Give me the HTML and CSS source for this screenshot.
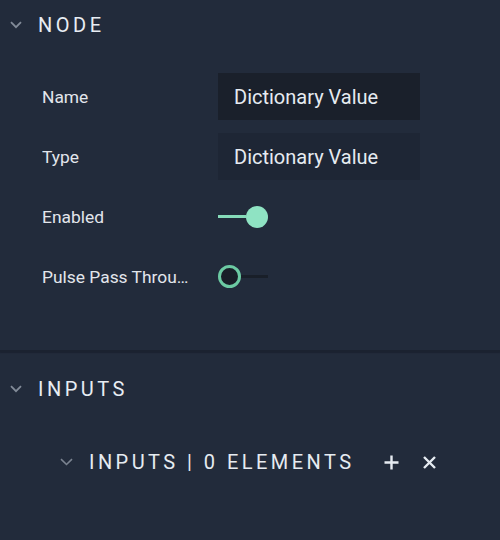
FILE: index.html
```html
<!DOCTYPE html>
<html>
<head>
<meta charset="utf-8">
<link rel="stylesheet" href="styles.css">
</head>
<body>
<div class="panel">
  <section class="section node">
    <div class="sec-head">
      <svg class="chev" width="12" height="8" viewBox="0 0 12 8"><path d="M1 1.2 L6 6.2 L11 1.2" fill="none" stroke="currentColor" stroke-width="1.8"/></svg>
      <span class="sec-title">NODE</span>
    </div>
    <div class="props">
      <div class="label">Name</div>
      <div class="field focused">Dictionary Value</div>
      <div class="label">Type</div>
      <div class="field">Dictionary Value</div>
      <div class="label">Enabled</div>
      <div class="ctl"><div class="toggle on"><span class="track"></span><span class="knob"></span></div></div>
      <div class="label">Pulse Pass Through</div>
      <div class="ctl"><div class="toggle off"><span class="knob"></span><span class="track"></span></div></div>
    </div>
  </section>
  <div class="divider"></div>
  <section class="section inputs">
    <div class="sec-head">
      <svg class="chev" width="12" height="8" viewBox="0 0 12 8"><path d="M1 1.2 L6 6.2 L11 1.2" fill="none" stroke="currentColor" stroke-width="1.8"/></svg>
      <span class="sec-title">INPUTS</span>
    </div>
    <div class="sub-head">
      <svg class="chev sub" width="13" height="8" viewBox="0 0 13 8"><path d="M1 1.2 L6.5 6.5 L12 1.2" fill="none" stroke="currentColor" stroke-width="1.6"/></svg>
      <span class="sub-title">INPUTS | 0 ELEMENTS</span>
      <svg class="act plus" width="15" height="15" viewBox="0 0 15 15"><path d="M7.5 0.5 V14.5 M0.5 7.5 H14.5" stroke="currentColor" stroke-width="2.4"/></svg>
      <svg class="act close" width="13" height="13" viewBox="0 0 13 13"><path d="M1 1 L12 12 M12 1 L1 12" stroke="currentColor" stroke-width="2.4"/></svg>
    </div>
  </section>
</div>
</body>
</html>
```
FILE: styles.css
```css
html, body {
  margin: 0;
  padding: 0;
  background: #222b3b;
}
body {
  width: 500px;
  height: 540px;
  overflow: hidden;
  font-family: Roboto, "Liberation Sans", sans-serif;
  color: #e4e9ef;
}
.panel {
  display: flex;
  flex-direction: column;
}
.sec-head {
  height: 48px;
  display: flex;
  align-items: center;
  padding-left: 10px;
  gap: 16px;
}
.chev {
  color: #828b98;
  flex: none;
}
.sec-title {
  font-size: 20px;
  letter-spacing: 3.5px;
  color: #e8edf3;
  line-height: 24px;
}
.node .sec-head {
  padding-top: 1px;
}
.props {
  display: grid;
  grid-template-columns: 150px 202px;
  column-gap: 26px;
  row-gap: 13px;
  padding: 24px 0 50px 42px;
  align-items: center;
}
.label {
  font-size: 17.4px;
  color: #e2e6ec;
  white-space: nowrap;
  overflow: hidden;
  text-overflow: ellipsis;
}
.field {
  height: 47px;
  box-sizing: border-box;
  padding-left: 16px;
  display: flex;
  align-items: center;
  font-size: 20px;
  color: #e6ebf1;
  background: #1e2635;
}
.field.focused {
  background: #1a202b;
}
.ctl {
  height: 47px;
  display: flex;
  align-items: center;
}
.toggle {
  width: 50px;
  height: 24px;
  display: flex;
  align-items: center;
}
.toggle .track {
  height: 3px;
  flex: 1;
}
.toggle .knob {
  width: 22px;
  height: 22px;
  border-radius: 50%;
  box-sizing: border-box;
  flex: none;
}
.toggle.on .track {
  background: #86dbb9;
}
.toggle.on .knob {
  background: #8fe3c3;
}
.toggle.off .knob {
  width: 23px;
  height: 23px;
  border: 3px solid #6ccaa3;
  background: #191e28;
}
.toggle.off .track {
  background: #191f29;
}
.divider {
  height: 2px;
  background: #1b2230;
  box-shadow: 0 1px 1px rgba(20, 26, 38, 0.5);
}
.inputs .sec-head {
  margin-top: 13px;
}
.sub-head {
  height: 48px;
  margin-top: 25px;
  display: flex;
  align-items: center;
  padding-left: 60px;
}
.chev.sub {
  color: #7b8390;
  margin-right: 16px;
}
.sub-title {
  font-size: 20px;
  letter-spacing: 3.45px;
  color: #e6ebf1;
  line-height: 24px;
}
.act {
  color: #e6ebf1;
  flex: none;
}
.plus {
  margin-left: 30px;
}
.close {
  margin-left: 24px;
}
```
